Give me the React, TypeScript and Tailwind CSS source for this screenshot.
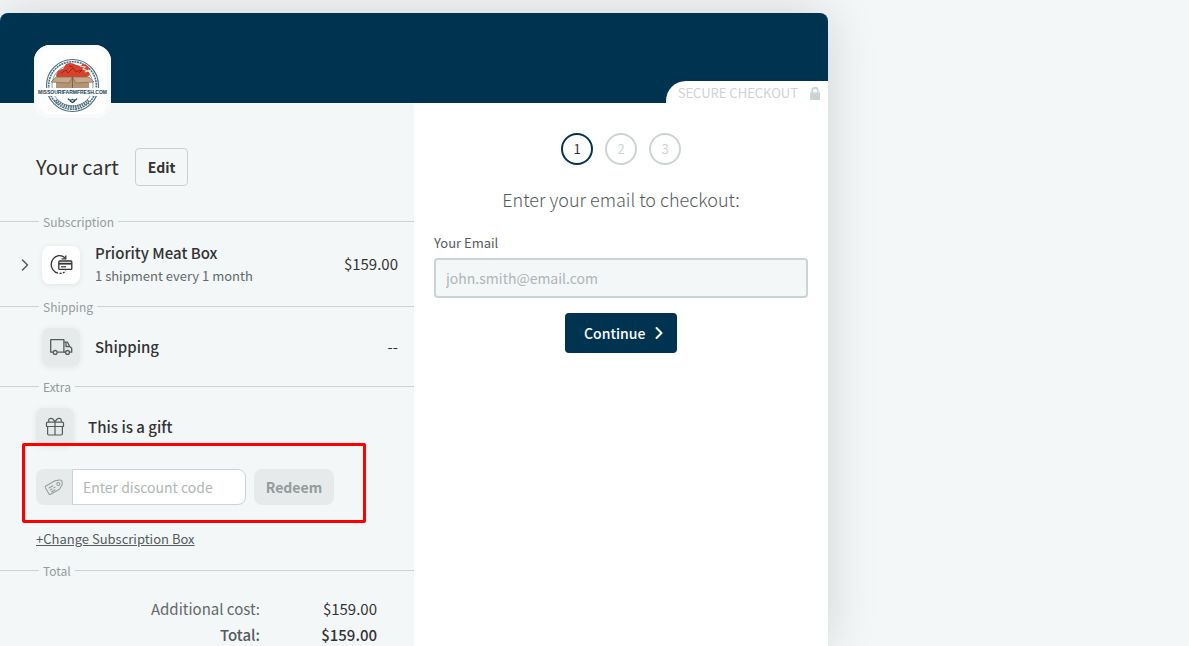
import type { ReactNode } from "react"

interface DividerProps {
  label: string
}

function Divider({ label }: DividerProps) {
  return (
    <div className="flex h-5 items-center text-xs text-[#939b9b]">
      <span className="mb-px h-px w-[39px] bg-[#cbd2d4]"></span>
      <span className="px-1 leading-5">{label}</span>
      <span className="mb-px h-px flex-1 bg-[#cbd2d4]"></span>
    </div>
  )
}

function IconTile({ children, className }: { children: ReactNode; className: string }) {
  return (
    <span
      className={`flex size-[38px] shrink-0 items-center justify-center rounded-lg shadow-[0_1px_6px_rgba(0,0,0,0.08)] ${className}`}
    >
      {children}
    </span>
  )
}

function SubscriptionIcon() {
  return (
    <svg viewBox="0 0 24 22" className="h-[22px] w-6" fill="none" stroke="#333" strokeWidth="1.3">
      <path d="M9 19.2A9 9 0 0 1 9.6 1.6c2.6-.2 4.8.7 6.3 2.2" />
      <path d="M16.8 1.6v3.2h-4.2" />
      <path d="M10.5 19.4c2.6.1 5-.9 6.5-2.8" strokeDasharray="2 1.4" />
      <rect x="9.8" y="7" width="13" height="8.4" rx="1" fill="#fff" />
      <path d="M10 9.7h12.6" strokeWidth="1.8" />
      <path d="M12 12.8h5" strokeWidth="1.2" />
    </svg>
  )
}

function TruckIcon() {
  return (
    <svg viewBox="0 0 24 18" className="h-[18px] w-6" fill="none" stroke="#555b5b" strokeWidth="1.3" strokeLinejoin="round">
      <path d="M4.2 14.2H1.7V1.7h13.2v12.5H8.2" />
      <path d="M14.9 4.2h3.6l2.2 4.3 2 1.7v4h-2.2M16.5 14.2h-1.6" />
      <path d="M17 4.4v4.1h3.7" />
      <circle cx="6.2" cy="14.4" r="1.9" />
      <circle cx="18.5" cy="14.4" r="1.9" />
    </svg>
  )
}

function GiftIcon() {
  return (
    <svg viewBox="0 0 20 20" className="size-5" fill="none" stroke="#555b5b" strokeWidth="1.2" strokeLinejoin="round">
      <path d="M2.5 5.2h15a1 1 0 0 1 1 1v3.3h-17V6.2a1 1 0 0 1 1-1Z" />
      <path d="M2.6 9.5v7.3c0 .8.5 1.2 1.2 1.2h12.4c.7 0 1.2-.4 1.2-1.2V9.5" />
      <path d="M10 5.2V18" />
      <path d="M10 5C8.7 2.2 6.7.8 4.8 1.5 3.3 2.1 3.6 4 4 5M10 5c1.3-2.8 3.3-4.2 5.2-3.5C16.7 2.1 16.4 4 16 5" />
    </svg>
  )
}

function TagIcon() {
  return (
    <svg viewBox="0 0 20 20" className="size-5" fill="none" stroke="#989e9e" strokeWidth="1.1" strokeLinejoin="round" strokeLinecap="round">
      <path d="M1.9 8.9 10.6 3.9l5-.9c1.500-.2 2.400.5 2.500 1.900l.1 2.900-2.800 4.500-8.700 5c-.8.500-1.400.300-1.800-.5L1.400 10.700c-.4-.8-.2-1.400.5-1.800Z" />
      <circle cx="14.300" cy="7" r="1.500" />
      <path d="M5 10.900 8.800 8.700M6.300 12.900l1.800-1M10 10.800l1-.6M7.500 14.900l3.600-2.100" />
    </svg>
  )
}

function LockIcon() {
  return (
    <svg viewBox="0 0 10 13" className="h-[13px] w-2.5" fill="#ccd3d5">
      <path d="M1 5.3h8a1 1 0 0 1 1 1V12a1 1 0 0 1-1 1H1a1 1 0 0 1-1-1V6.3a1 1 0 0 1 1-1Z" />
      <path d="M2.2 6V3.6a2.800 2.800 0 0 1 5.600 0V6" fill="none" stroke="#ccd3d5" strokeWidth="1.7" />
    </svg>
  )
}

function ShopLogo() {
  return (
    <svg viewBox="0 0 77 73" className="h-[73px] w-[77px]" role="img" aria-label="Missouri Farm Fresh">
      <g fill="none" stroke="#4d7182">
        <circle cx="38.5" cy="40.500" r="26" strokeWidth="1.2" />
        <circle cx="38.5" cy="40.500" r="23.8" strokeWidth="1.6" strokeDasharray="2 .7" />
        <circle cx="38.5" cy="40.500" r="20.5" strokeWidth=".7" />
      </g>
      <path d="M22 31c1-5 4-7 7-7l3-5c4-2 7-1 10 1l4 1c3-3 7-2 9 2l-1 3 2 4-3 2H23Z" fill="#d9412b" />
      <path d="M27 28l5-3 2 3 5-5 3 4 5-2M35 21l4 1M45 28l4-4" fill="none" stroke="#8f2a20" strokeWidth="1" />
      <path d="m46 21 5 1-2 2 5 2-3 1" fill="none" stroke="#f7e6df" strokeWidth="1.2" />
      <path d="M22 32h33v12H22Z" fill="#b39473" />
      <path d="m22 32-5 5 18 1 3.5-6 3.5 6 18-1-5-5Z" fill="#c4aa8b" stroke="#7f6b58" strokeWidth=".7" />
      <path d="M38.5 32v12" stroke="#6f5a48" strokeWidth=".8" />
      <path d="M3 43h71v8H3Z" fill="#fff" />
      <text
        x="38.5"
        y="49"
        textAnchor="middle"
        className="fill-[#143e54] font-['Liberation_Sans',sans-serif] text-[5px] font-bold"
      >
        MISSOURIFARMFRESH.COM
      </text>
      <path d="M34 53.500c1 2 2.500 2 4.500 1 2 1 3.500 1 4.500-1M36 56l2.500 1.500 2.500-1.500" fill="none" stroke="#143e54" strokeWidth="1.3" />
      <path d="M22 55c9 9 24 9 33 0" fill="none" stroke="#5d7480" strokeWidth="3" strokeDasharray="1.5 .8" />
    </svg>
  )
}

function ChevronRight({ className }: { className: string }) {
  return (
    <svg viewBox="0 0 8 14" className={className} fill="none" stroke="currentColor" strokeLinecap="round" strokeLinejoin="round">
      <path d="m1.5 2 5 5-5 5" />
    </svg>
  )
}

function Cart() {
  return (
    <section className="bg-[#f3f7f8] pt-[45px]">
      <div className="flex items-center gap-4 pl-9">
        <h1 className="text-xl leading-8">Your cart</h1>
        <button className="h-[38px] rounded border border-[#c9d0d2] px-3 text-sm font-bold">Edit</button>
      </div>

      <div className="mt-[26px]">
        <Divider label="Subscription" />
      </div>
      <div className="flex h-[65px] items-center pr-4 pl-[21px]">
        <button aria-label="Show details" className="w-[21px] text-[#555b5b]">
          <ChevronRight className="h-3.5 w-2 stroke-[1.5]" />
        </button>
        <IconTile className="bg-white">
          <SubscriptionIcon />
        </IconTile>
        <div className="ml-[15px] flex-1 pb-0.5">
          <p className="text-[15px] leading-6 font-medium">Priority Meat Box</p>
          <p className="text-[13px] leading-[22px] text-[#626969]">1 shipment every 1 month</p>
        </div>
        <span className="text-[15px]">$159.00</span>
      </div>

      <Divider label="Shipping" />
      <div className="flex h-[60px] items-center pr-4 pl-[42px]">
        <IconTile className="bg-[#e6eaeb]">
          <TruckIcon />
        </IconTile>
        <span className="ml-[15px] flex-1 text-[15px] font-medium">Shipping</span>
        <span className="text-[15px]">--</span>
      </div>

      <Divider label="Extra" />
      <button className="mt-[11px] ml-9 flex items-center gap-3.5 text-[15px] font-medium">
        <IconTile className="bg-[#e6eaeb]">
          <GiftIcon />
        </IconTile>
        This is a gift
      </button>

      <form className="relative mt-[23px] flex h-9 pl-9">
        <label htmlFor="discount" aria-label="Discount code" className="flex w-9 items-center justify-center rounded-l-lg bg-[#e6eaeb]">
          <TagIcon />
        </label>
        <input
          id="discount"
          placeholder="Enter discount code"
          className="w-[174px] rounded-r-lg border border-[#ccd3d5] bg-white px-2.5 text-sm placeholder:text-[#b0b5b5]"
        />
        <button type="button" className="ml-2 w-20 rounded-lg bg-[#e6eaeb] text-sm font-bold text-[#939b9b]">
          Redeem
        </button>
        {/* Highlight around the discount form */}
        <div className="pointer-events-none absolute -top-[26px] left-[22px] h-20 w-[344px] rounded-xs border-3 border-[#ff0000]"></div>
      </form>

      <a href="#" className="mt-6 ml-9 block w-fit text-[13px] leading-5 text-[#555b5b] underline">
        +Change Subscription Box
      </a>

      <div className="mt-3">
        <Divider label="Total" />
      </div>
      <dl className="mt-[17px] grid grid-cols-[260px_117px] gap-y-1 text-right text-[15px] leading-[22px]">
        <dt className="text-[#626969]">Additional cost:</dt>
        <dd>$159.00</dd>
        <dt className="font-medium text-[#555b5b]">Total:</dt>
        <dd className="font-medium">$159.00</dd>
      </dl>
    </section>
  )
}

const steps = [1, 2, 3]

function EmailStep() {
  return (
    <section className="bg-white px-5 pt-[30px]">
      <ol className="flex justify-center gap-3">
        {steps.map((step) => (
          <li
            key={step}
            className={`flex size-8 items-center justify-center rounded-full border-2 text-[13px] ${
              step === 1 ? "border-[#003350]" : "border-[#ccd3d5] text-[#ccd3d5]"
            }`}
          >
            {step}
          </li>
        ))}
      </ol>
      <h2 className="mt-[18px] text-center text-lg leading-8 font-light text-[#555b5b]">Enter your email to checkout:</h2>
      <form className="mt-[18px]">
        <label htmlFor="email" className="block text-[13px] leading-5 text-[#555b5b]">
          Your Email
        </label>
        <input
          id="email"
          type="email"
          placeholder="john.smith@email.com"
          className="mt-[5px] h-10 w-full rounded border-2 border-[#ccd3d5] bg-[#f3f7f8] px-2.5 text-sm placeholder:text-[#b0b5b5]"
        />
        <button
          type="button"
          className="mx-auto mt-[15px] flex h-10 w-28 items-center gap-2.5 rounded bg-[#003350] pl-[19px] text-sm font-medium text-white"
        >
          Continue
          <ChevronRight className="h-3.5 w-2 stroke-2" />
        </button>
      </form>
    </section>
  )
}

export default function App() {
  return (
    <div className="min-h-screen overflow-hidden bg-[#f3f7f8] pt-[13px] font-['Noto_Sans_CJK_SC','Source_Sans_Pro',sans-serif] text-[#333]">
      <main className="w-full max-w-[828px] rounded-t-lg shadow-[0_0_50px_rgba(0,0,0,0.15)]">
        <header className="relative flex h-[90px] items-end justify-end rounded-t-lg bg-[#003350]">
          <div className="absolute top-8 left-[34px] rounded-2xl bg-white shadow-[inset_0_0_0_4px_#f9fbfb]">
            <ShopLogo />
          </div>
          <div className="flex h-[22px] items-center gap-3 rounded-tl-[20px] bg-white pt-0.5 pr-2 pl-3 text-[13px] leading-5 text-[#ccd3d5]">
            SECURE CHECKOUT
            <LockIcon />
          </div>
        </header>
        <div className="grid grid-cols-2">
          <Cart />
          <EmailStep />
        </div>
      </main>
    </div>
  )
}
